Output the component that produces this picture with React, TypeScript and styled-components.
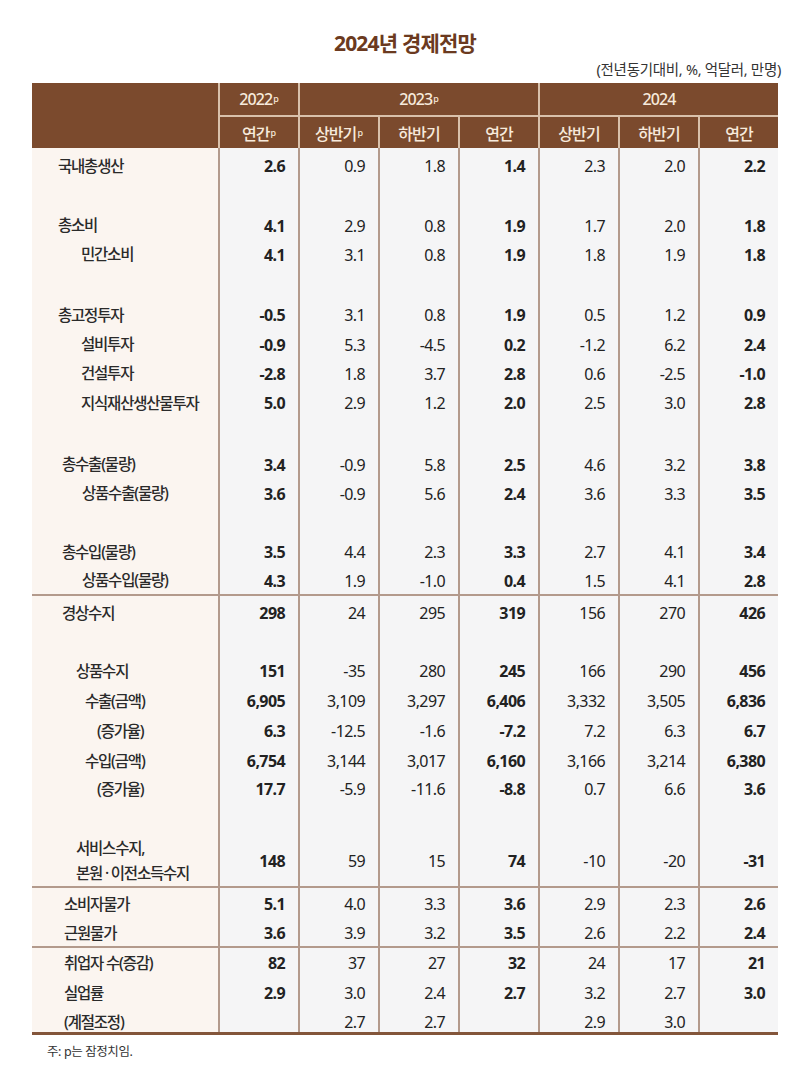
import React from 'react';
import styled, { createGlobalStyle } from 'styled-components';

const FONT = `"Noto Sans", "Noto Sans CJK KR", sans-serif`;
const BROWN = '#7b4a2d';
const HEAD_LINE = '#d9c1ab';
const V_LINE = '#b39a8c';
const LABEL_BG = '#fbf5f0';
const CELL_BG = '#f5f5f6';

const GlobalStyle = createGlobalStyle`
  * { box-sizing: border-box; }
  html, body { margin: 0; padding: 0; background: #fff; }
  body { font-family: ${FONT}; color: #222; }
`;

const Page = styled.div`
  width: 807px;
  height: 1077px;
  padding: 28px 29px 0 32px;
  background: #fff;
`;

const Title = styled.h1`
  margin: 0;
  text-align: center;
  font-size: 21px;
  line-height: 30px;
  font-weight: 700;
  letter-spacing: -0.8px;
  color: #6b3a20;
`;

const Unit = styled.div`
  margin-top: 2px;
  margin-right: -3px;
  text-align: right;
  font-size: 14.5px;
  line-height: 19px;
  color: #333;
  letter-spacing: -0.3px;
`;

const Table = styled.div`
  margin-top: 4px;
  width: 746px;
  border-bottom: 3px solid #83553a;
`;

const Header = styled.div`
  display: grid;
  grid-template-columns: 186px repeat(7, 80px);
  grid-template-rows: 32px 33px;
  background: ${BROWN};
`;

const HeadCell = styled.div<{ $col: string; $row: string; $top?: boolean; $left?: boolean }>`
  grid-column: ${(p) => p.$col};
  grid-row: ${(p) => p.$row};
  display: flex;
  align-items: center;
  justify-content: center;
  color: #f7eadc;
  font-size: 16px;
  font-weight: 500;
  letter-spacing: -0.9px;
  border-left: ${(p) => (p.$left ? `2px solid ${HEAD_LINE}` : 'none')};
  border-top: ${(p) => (p.$top ? `2px solid ${HEAD_LINE}` : 'none')};
`;

const Sup = styled.sup`
  font-size: 9px;
  line-height: 0;
  vertical-align: 7px;
  margin-left: 1px;
  letter-spacing: 0;
`;

const BodyRow = styled.div<{ $h: number; $divider?: boolean }>`
  box-sizing: content-box;
  display: grid;
  grid-template-columns: 186px repeat(7, 80px);
  grid-template-rows: ${(p) => p.$h}px;
  height: ${(p) => p.$h}px;
  border-top: ${(p) => (p.$divider ? `2px solid ${V_LINE}` : 'none')};
`;

const LabelCell = styled.div<{ $indent: number; $padTop?: number }>`
  display: flex;
  flex-direction: column;
  justify-content: center;
  overflow: visible;
  padding-left: ${(p) => p.$indent}px;
  padding-top: ${(p) => p.$padTop ?? 0}px;
  background: ${LABEL_BG};
  font-size: 15.5px;
  line-height: 25px;
  font-weight: 500;
  letter-spacing: -1.2px;
  color: #2a2a2a;
  white-space: nowrap;
`;

const ValueCell = styled.div<{ $bold: boolean; $padTop?: number }>`
  display: flex;
  align-items: center;
  justify-content: flex-end;
  padding-right: 13px;
  padding-top: ${(p) => p.$padTop ?? 0}px;
  border-left: 2px solid ${V_LINE};
  background: ${CELL_BG};
  font-size: 16px;
  font-weight: ${(p) => (p.$bold ? 700 : 400)};
  letter-spacing: -0.6px;
  color: #222;
`;

const Note = styled.div`
  margin-top: 9px;
  padding-left: 15px;
  font-size: 12.5px;
  line-height: 16px;
  color: #333;
  letter-spacing: -0.4px;
`;

type DataRow = {
  label: string[];
  indent: number;
  vals: string[];
  h: number;
  divider?: boolean;
  padTop?: number;
};
type Row = DataRow | { spacer: number };

const rows: Row[] = [
  { label: ['국내총생산'], indent: 26, vals: ['2.6', '0.9', '1.8', '1.4', '2.3', '2.0', '2.2'], h: 36 },
  { spacer: 27 },
  { label: ['총소비'], indent: 26, vals: ['4.1', '2.9', '0.8', '1.9', '1.7', '2.0', '1.8'], h: 29 },
  { label: ['민간소비'], indent: 49, vals: ['4.1', '3.1', '0.8', '1.9', '1.8', '1.9', '1.8'], h: 29 },
  { spacer: 31 },
  { label: ['총고정투자'], indent: 26, vals: ['-0.5', '3.1', '0.8', '1.9', '0.5', '1.2', '0.9'], h: 30 },
  { label: ['설비투자'], indent: 49, vals: ['-0.9', '5.3', '-4.5', '0.2', '-1.2', '6.2', '2.4'], h: 29 },
  { label: ['건설투자'], indent: 49, vals: ['-2.8', '1.8', '3.7', '2.8', '0.6', '-2.5', '-1.0'], h: 29 },
  { label: ['지식재산생산물투자'], indent: 49, vals: ['5.0', '2.9', '1.2', '2.0', '2.5', '3.0', '2.8'], h: 30 },
  { spacer: 32 },
  { label: ['총수출(물량)'], indent: 30, vals: ['3.4', '-0.9', '5.8', '2.5', '4.6', '3.2', '3.8'], h: 29 },
  { label: ['상품수출(물량)'], indent: 50, vals: ['3.6', '-0.9', '5.6', '2.4', '3.6', '3.3', '3.5'], h: 29 },
  { spacer: 29 },
  { label: ['총수입(물량)'], indent: 30, vals: ['3.5', '4.4', '2.3', '3.3', '2.7', '4.1', '3.4'], h: 30 },
  { label: ['상품수입(물량)'], indent: 50, vals: ['4.3', '1.9', '-1.0', '0.4', '1.5', '4.1', '2.8'], h: 27 },
  { label: ['경상수지'], indent: 30, vals: ['298', '24', '295', '319', '156', '270', '426'], h: 34, divider: true },
  { spacer: 26 },
  { label: ['상품수지'], indent: 44, vals: ['151', '-35', '280', '245', '166', '290', '456'], h: 30 },
  { label: ['수출(금액)'], indent: 53, vals: ['6,905', '3,109', '3,297', '6,406', '3,332', '3,505', '6,836'], h: 30 },
  { label: ['(증가율)'], indent: 65, vals: ['6.3', '-12.5', '-1.6', '-7.2', '7.2', '6.3', '6.7'], h: 30 },
  { label: ['수입(금액)'], indent: 53, vals: ['6,754', '3,144', '3,017', '6,160', '3,166', '3,214', '6,380'], h: 30 },
  { label: ['(증가율)'], indent: 65, vals: ['17.7', '-5.9', '-11.6', '-8.8', '0.7', '6.6', '3.6'], h: 26 },
  { spacer: 34 },
  { label: ['서비스수지,', '본원 · 이전소득수지'], indent: 44, vals: ['148', '59', '15', '74', '-10', '-20', '-31'], h: 50 },
  { label: ['소비자물가'], indent: 32, vals: ['5.1', '4.0', '3.3', '3.6', '2.9', '2.3', '2.6'], h: 32, divider: true },
  { label: ['근원물가'], indent: 32, vals: ['3.6', '3.9', '3.2', '3.5', '2.6', '2.2', '2.4'], h: 26 },
  { label: ['취업자 수(증감)'], indent: 32, vals: ['82', '37', '27', '32', '24', '17', '21'], h: 30, divider: true },
  { label: ['실업률'], indent: 32, vals: ['2.9', '3.0', '2.4', '2.7', '3.2', '2.7', '3.0'], h: 30 },
  { label: ['(계절조정)'], indent: 32, vals: ['', '2.7', '2.7', '', '2.9', '3.0', ''], h: 24, padTop: 4 },
];

const BOLD = [0, 3, 6];
const EMPTY = ['', '', '', '', '', '', ''];

const subHeads: { text: string; sup?: boolean }[] = [
  { text: '연간', sup: true },
  { text: '상반기', sup: true },
  { text: '하반기' },
  { text: '연간' },
  { text: '상반기' },
  { text: '하반기' },
  { text: '연간' },
];

export default function App() {
  return (
    <>
      <GlobalStyle />
      <Page>
        <Title>2024년 경제전망</Title>
        <Unit>(전년동기대비, %, 억달러, 만명)</Unit>
        <Table>
          <Header>
            <HeadCell $col="1" $row="1 / 3" />
            <HeadCell $col="2" $row="1" $left>
              2022<Sup>p</Sup>
            </HeadCell>
            <HeadCell $col="3 / 6" $row="1" $left>
              2023<Sup>p</Sup>
            </HeadCell>
            <HeadCell $col="6 / 9" $row="1" $left>
              2024
            </HeadCell>
            {subHeads.map((s, i) => (
              <HeadCell key={i} $col={String(i + 2)} $row="2" $left $top>
                {s.text}
                {s.sup && <Sup>p</Sup>}
              </HeadCell>
            ))}
          </Header>
          {rows.map((r, idx) => {
            if ('spacer' in r) {
              return (
                <BodyRow key={idx} $h={r.spacer}>
                  <LabelCell $indent={0} />
                  {EMPTY.map((_, i) => (
                    <ValueCell key={i} $bold={false} />
                  ))}
                </BodyRow>
              );
            }
            return (
              <BodyRow key={idx} $h={r.h} $divider={r.divider}>
                <LabelCell $indent={r.indent} $padTop={r.padTop}>
                  {r.label.map((l, i) => (
                    <span key={i}>{l}</span>
                  ))}
                </LabelCell>
                {r.vals.map((v, i) => (
                  <ValueCell key={i} $bold={BOLD.includes(i)} $padTop={r.padTop}>
                    {v}
                  </ValueCell>
                ))}
              </BodyRow>
            );
          })}
        </Table>
        <Note>주: p는 잠정치임.</Note>
      </Page>
    </>
  );
}
